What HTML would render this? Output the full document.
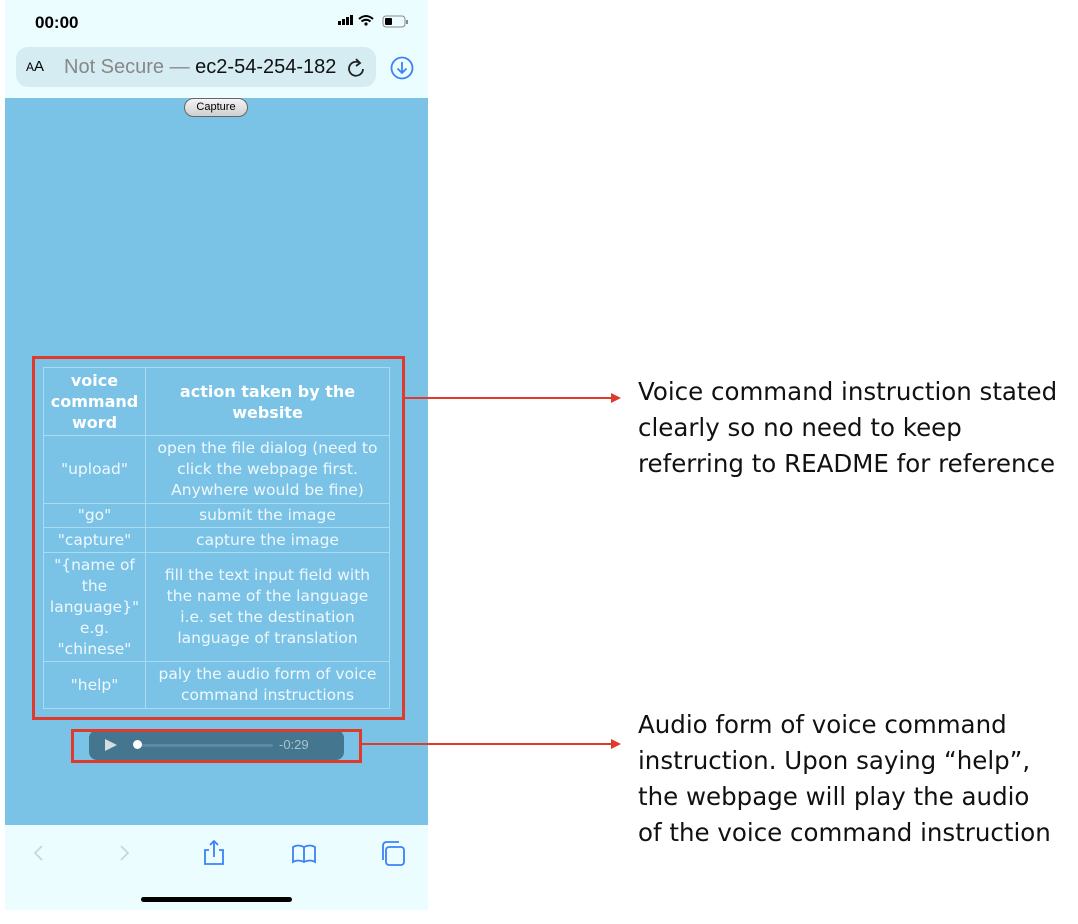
<!DOCTYPE html>
<html><head><meta charset="utf-8"><style>
*{margin:0;padding:0;box-sizing:border-box}
body{width:1078px;height:924px;background:#fff;position:relative;overflow:hidden;font-family:"Liberation Sans",sans-serif}
.ph{position:absolute;left:5px;top:0;width:423px;height:910px;background:#ebfdfe}
.blue{position:absolute;left:5px;top:98px;width:423px;height:727px;background:#7bc3e6}
.abs{position:absolute}
table{position:absolute;left:43px;top:367px;width:347px;border-collapse:collapse;font-family:"DejaVu Sans",sans-serif;font-size:15.5px;line-height:21px;color:#eef8fd;text-align:center}
td{border:1px solid #a9dbf2;padding:0 5px}
th{border:1px solid #a9dbf2;color:#fff;font-weight:bold;padding:0 4px;font-size:16px}
.note{position:absolute;left:638px;font-size:24.5px;line-height:36px;color:#111;font-family:"DejaVu Sans","Liberation Sans",sans-serif;letter-spacing:0}
</style></head><body>
<div class="ph"></div>
<div class="abs" style="left:35px;top:13px;font-size:17px;font-weight:bold">00:00</div>
<svg class="abs" style="left:338px;top:14px" width="75" height="16">
<rect x="0" y="7" width="3" height="4" fill="#000"/><rect x="4" y="5" width="3" height="6" fill="#000"/><rect x="8" y="3" width="3" height="8" fill="#000"/><rect x="12" y="1" width="3" height="10" fill="#000"/>
<path d="M21 5 Q28 -1 35 5 M23.5 7.5 Q28 4 32.5 7.5" stroke="#000" stroke-width="2" fill="none"/><circle cx="28" cy="10" r="1.6" fill="#000"/>
<rect x="45" y="2" width="22" height="11" rx="3" fill="none" stroke="#888" stroke-width="1"/><rect x="47" y="4" width="7" height="7" rx="1" fill="#000"/><rect x="68" y="6" width="2" height="4" fill="#888"/>
</svg>
<div class="abs" style="left:16px;top:47px;width:360px;height:40px;border-radius:12px;background:#d4ecf2"></div>
<div class="abs" style="left:26px;top:58px;font-size:15px"><span style="font-size:12px">A</span>A</div>
<div class="abs" style="left:64px;top:56px;font-size:20px;color:#888;white-space:nowrap;width:272px;overflow:hidden">Not Secure — <span style="color:#111">ec2-54-254-182</span></div>
<svg class="abs" style="left:346px;top:57px" width="20" height="22"><path d="M14 6 A7 7 0 1 0 17 12" stroke="#222" stroke-width="1.8" fill="none"/><path d="M10 2 L14 6 L10 9" stroke="#222" stroke-width="1.8" fill="none"/></svg>
<svg class="abs" style="left:390px;top:56px" width="24" height="24"><circle cx="12" cy="12" r="10.5" stroke="#3b82f6" stroke-width="1.8" fill="none"/><path d="M12 6 V17 M7.5 12.5 L12 17 L16.5 12.5" stroke="#3b82f6" stroke-width="1.8" fill="none"/></svg>
<div class="blue"></div>
<div class="abs" style="left:184px;top:98px;width:64px;height:19px;border:1px solid #666;border-radius:10px;background:linear-gradient(#f4f4f4,#cfcfcf);font-size:11px;text-align:center;line-height:17px">Capture</div>
<table>
<tr style="height:68px"><th style="width:102px">voice command word</th><th>action taken by the website</th></tr>
<tr style="height:68px"><td>"upload"</td><td>open the file dialog (need to click the webpage first. Anywhere would be fine)</td></tr>
<tr style="height:24px"><td>"go"</td><td>submit the image</td></tr>
<tr style="height:25px"><td>"capture"</td><td>capture the image</td></tr>
<tr style="height:109px"><td>"{name of the language}" e.g. "chinese"</td><td>fill the text input field with<br>the name of the language<br>i.e. set the destination<br>language of translation</td></tr>
<tr style="height:47px"><td>"help"</td><td>paly the audio form of voice command instructions</td></tr>
</table>
<div class="abs" style="left:32px;top:356px;width:373px;height:364px;border:3px solid #e03a2c"></div>
<div class="abs" style="left:89px;top:730px;width:255px;height:30px;border-radius:8px;background:#45768f"></div>
<svg class="abs" style="left:104px;top:738px" width="14" height="14"><path d="M1 1 L13 7 L1 13Z" fill="#d5dde2"/></svg>
<div class="abs" style="left:138px;top:744px;width:135px;height:3px;background:#5e8aa1;border-radius:2px"></div>
<div class="abs" style="left:133px;top:740px;width:9px;height:9px;border-radius:50%;background:#fff"></div>
<div class="abs" style="left:279px;top:737px;font-size:13px;color:#a9c3d1">-0:29</div>
<div class="abs" style="left:71px;top:729px;width:291px;height:34px;border:3px solid #e03a2c"></div>
<svg class="abs" style="left:0;top:0" width="1078" height="924">
<path d="M404 398 H612" stroke="#e03a2c" stroke-width="2"/><path d="M611 393 L621 398 L611 403Z" fill="#e03a2c"/>
<path d="M361 744 H612" stroke="#e03a2c" stroke-width="2"/><path d="M611 739 L621 744 L611 749Z" fill="#e03a2c"/>
<path d="M42 846 L35 853 L42 860" stroke="#c9d3d8" stroke-width="1.6" fill="none"/>
<path d="M121 846 L128 853 L121 860" stroke="#c9d3d8" stroke-width="1.6" fill="none"/>
<g stroke="#3b82f6" stroke-width="1.8" fill="none"><path d="M209 850 H205 V864 H223 V850 H219 M214 857 V841 M210 845 L214 841 L218 845"/>
<path d="M304 847 Q298 844 293 847 V862 Q298 859 304 862 Q310 859 315 862 V847 Q310 844 304 847 V861"/>
<rect x="386" y="847" width="18" height="18" rx="3"/><path d="M383 860 V846 Q383 842 387 842 H399"/></g>
</svg>
<div class="abs" style="left:141px;top:897px;width:151px;height:5px;border-radius:3px;background:#000"></div>
<div class="note" style="top:374px">Voice command instruction stated<br>clearly so no need to keep<br>referring to README for reference</div>
<div class="note" style="top:707px">Audio form of voice command<br>instruction. Upon saying “help”,<br>the webpage will play the audio<br>of the voice command instruction</div>
</body></html>
